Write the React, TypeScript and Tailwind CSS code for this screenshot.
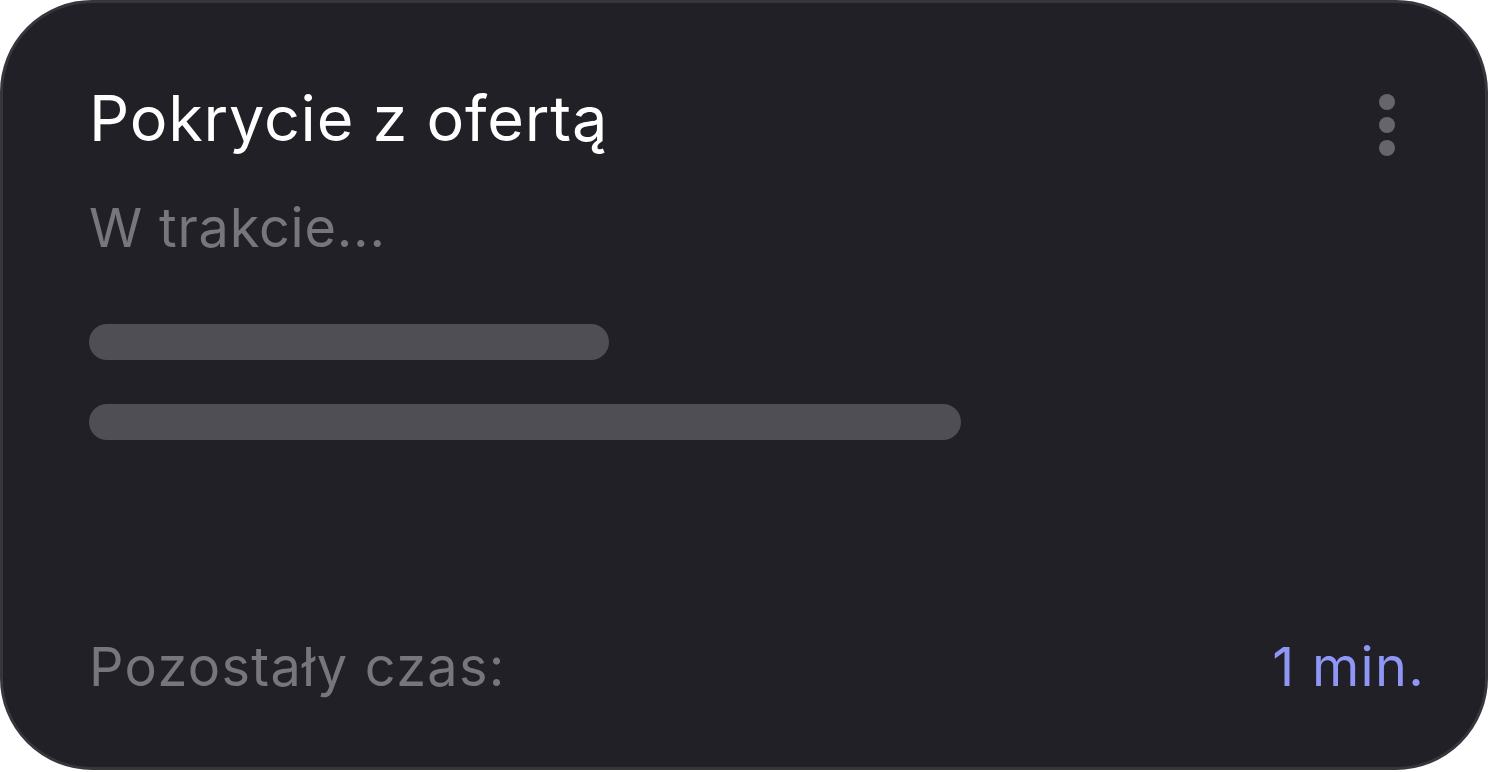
export default function App() {
  return (
    <div className="h-[772px] w-[1488px] bg-white" style={{ fontFamily: "Inter, 'Noto Sans', sans-serif" }}>
      <div className="flex h-[770px] w-full flex-col rounded-[92px] border-[3px] border-[#37363d] bg-[#212027] pl-[86px] pr-[60px]">
        <div className="flex items-start justify-between pr-[30px] pt-[80px]">
          <h1 className="text-[63px] leading-[70px] font-normal tracking-[0.75px] text-white">Pokrycie z ofertą</h1>
          <div className="mt-[11px] flex flex-col gap-[7px]">
            <span className="h-[16px] w-[16px] rounded-full bg-[#66656b]" />
            <span className="h-[16px] w-[16px] rounded-full bg-[#66656b]" />
            <span className="h-[16px] w-[16px] rounded-full bg-[#66656b]" />
          </div>
        </div>
        <p className="mt-[42px] text-[54px] leading-[60px] tracking-[0.8px] text-[#77767c]">W trakcie...</p>
        <div className="mt-[66px] flex flex-col gap-[44px]">
          <div className="h-[36px] w-[520px] rounded-full bg-[#4f4e55]" />
          <div className="h-[36px] w-[872px] rounded-full bg-[#4f4e55]" />
        </div>
        <div className="mt-auto mb-[70px] flex items-baseline justify-between text-[54px] leading-[60px] tracking-[1.3px]">
          <span className="text-[#77767c]">Pozostały czas:</span>
          <span className="text-[#8e96f6]">1 min.</span>
        </div>
      </div>
    </div>
  );
}
